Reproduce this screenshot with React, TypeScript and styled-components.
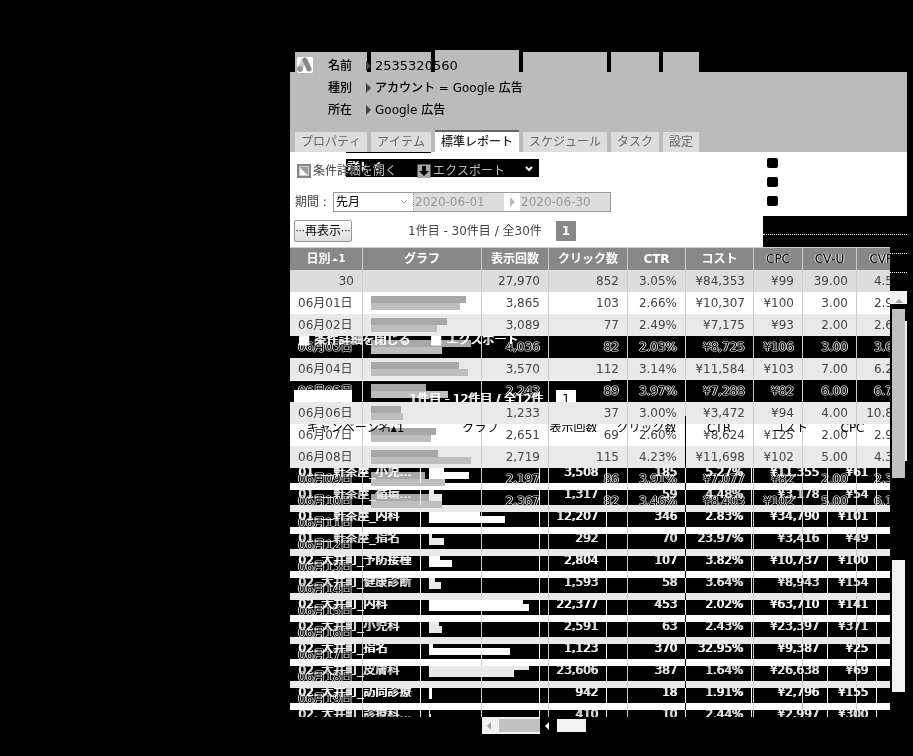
import React from "react";
import styled, { createGlobalStyle, css } from "styled-components";

const GlobalStyle = createGlobalStyle`
  * { box-sizing: border-box; }
  body {
    margin: 0;
    background: #000;
    color: #444;
    font: 12px/22px "DejaVu Sans", "Noto Sans CJK JP", sans-serif;
    font-kerning: none;
  }
  button, select, input { font: inherit; font-kerning: none; color: inherit; margin: 0; }
`;

const Page = styled.main`
  min-height: 100vh;
  padding: 50px 6px 20px 290px;
  background: #000;
  overflow: hidden;
`;

/* ---------- header ---------- */

const Header = styled.header`
  position: relative;
  padding-top: 5px;
  background: linear-gradient(#000 22px, #bbb 22px);
`;

const EchoTabs = styled.div`
  position: absolute;
  top: 0;
  left: 5px;
  height: 22px;
  display: flex;
  align-items: flex-end;
  gap: 4px;
`;

const EchoTab = styled.div<{ $w: number; $tall?: boolean }>`
  width: ${(p) => p.$w}px;
  height: ${(p) => (p.$tall ? 22 : 20)}px;
  background: #bbb;
`;

const Identity = styled.div`
  position: relative;
  display: flex;
  padding-left: 7px;
`;

const Logo = styled.svg`
  width: 16px;
  height: 16px;
  margin: 2px 15px 0 0;
`;

const Facts = styled.dl`
  margin: 0;
  color: #000;
  font-weight: 500;
`;

const Fact = styled.div`
  display: flex;
  align-items: center;
  height: 22px;
  white-space: nowrap;
  svg { margin: 0 4px 0 0; }
`;

const FactLabel = styled.dt`
  width: 38px;
`;

const FactValue = styled.dd<{ $large?: boolean }>`
  margin: 0;
  font-size: ${(p) => (p.$large ? 13 : 12)}px;
`;

const Tabs = styled.nav`
  display: flex;
  align-items: flex-end;
  gap: 4px;
  height: 31px;
  padding: 0 5px;
`;

const Tab = styled.button<{ $active?: boolean }>`
  height: ${(p) => (p.$active ? 22 : 20)}px;
  padding: 0 6px;
  border: 0;
  border-top: ${(p) => (p.$active ? "2px solid #666" : "0")};
  background: ${(p) => (p.$active ? "#fff" : "#ddd")};
  color: ${(p) => (p.$active ? "#222" : "#666")};
  font-weight: ${(p) => (p.$active ? 500 : 400)};
  line-height: 20px;
  white-space: nowrap;
`;

/* ---------- controls ---------- */

const Controls = styled.section`
  display: flex;
  height: 95px;
`;

const Filters = styled.div`
  flex: 1;
  position: relative;
  background: #fff;
`;

const Shade = styled.div`
  position: absolute;
  top: 7px;
  left: 56px;
  width: 193px;
  height: 18px;
  background: #000;
  svg { position: absolute; right: 6px; top: 7px; }
`;

const ShadeLine = styled.div`
  position: absolute;
  top: 0;
  left: 56px;
  width: 85px;
  height: 1px;
  background: #000;
`;

const ShadeText = styled.span`
  position: absolute;
  top: 0;
  left: 1px;
  height: 12px;
  line-height: 18px;
  overflow: hidden;
  color: #fff;
  text-shadow: 1px 0 #fff;
`;

const Actions = styled.div`
  display: flex;
  align-items: center;
  height: 38px;
  padding-left: 7px;
  mix-blend-mode: difference;
`;

const Action = styled.button<{ $wide?: boolean }>`
  display: flex;
  align-items: center;
  gap: 2px;
  width: ${(p) => (p.$wide ? 120 : 100)}px;
  padding: 0;
  border: 0;
  background: none;
  color: #bbb;
  white-space: nowrap;
`;

const Period = styled.div`
  display: flex;
  align-items: center;
  height: 24px;
  padding-left: 5px;
  > label { width: 38px; white-space: nowrap; }
`;

const PeriodBox = styled.div`
  display: flex;
  height: 20px;
  border: 1px solid #999;
  background: #fff;
`;

const SelectWrap = styled.div`
  display: flex;
  align-items: center;
  width: 80px;
  border-right: 1px dotted #999;
  svg { flex: none; margin-left: -14px; pointer-events: none; }
`;

const PeriodSelect = styled.select`
  appearance: none;
  flex: none;
  width: 80px;
  height: 18px;
  padding: 0 2px;
  border: 0;
  background: transparent;
  color: #000;
  line-height: 18px;
`;

const DateInput = styled.input`
  width: 90px;
  height: 18px;
  padding: 0 1px;
  border: 0;
  background: #ddd;
  color: #999;
`;

const DateArrow = styled.span`
  display: flex;
  align-items: center;
  justify-content: center;
  width: 16px;
`;

const Paging = styled.div`
  display: flex;
  align-items: center;
  height: 34px;
  padding-left: 4px;
`;

const Reload = styled.button`
  display: flex;
  align-items: center;
  justify-content: center;
  width: 58px;
  height: 22px;
  padding: 0;
  border: 1px solid #999;
  border-radius: 2px;
  background: linear-gradient(#fff, #ddd);
  color: #000;
  line-height: 20px;
  white-space: nowrap;
`;

const Leader = styled.span`
  font-size: 10px;
`;

const Count = styled.span`
  margin-left: 56px;
  width: 148px;
  white-space: nowrap;
`;

const PageNumber = styled.button`
  width: 20px;
  height: 20px;
  padding: 0;
  border: 0;
  background: #888;
  color: #fff;
  font-weight: 700;
  line-height: 20px;
`;

const Side = styled.div`
  width: 144px;
`;

const SideTop = styled.div`
  display: flex;
  flex-direction: column;
  gap: 9px;
  height: 64px;
  padding: 6px 4px;
  background: #fff;
`;

const Dot = styled.i`
  width: 11px;
  height: 10px;
  border-radius: 2px;
  background: #000;
`;

const DottedRule = styled.div<{ $short?: boolean }>`
  height: ${(p) => (p.$short ? 7 : 19)}px;
  border-bottom: 1px dotted #fff;
`;

/* ---------- report table ---------- */

const Report = styled.section`
  display: flex;
`;

const TableArea = styled.div`
  position: relative;
  flex: 1;
  min-width: 0;
  overflow: hidden;
`;

const Table = styled.table`
  width: 631px;
  table-layout: fixed;
  border-collapse: separate;
  border-spacing: 0;
  border-top: 1px solid #ccc;
  th, td {
    padding: 0;
    border-right: 1px solid #ccc;
    white-space: nowrap;
    overflow: hidden;
    vertical-align: top;
  }
`;

const outlined = css`
  color: #000;
  text-shadow: 1px 0 #ddd, -1px 0 #ddd, 0 1px #888, 0 -1px #888;
`;

const Head = styled.th<{ $outlined?: boolean }>`
  height: 22px;
  background: #888;
  color: #fff;
  font-weight: 700;
  ${(p) => p.$outlined && css`${outlined} font-weight: 400;`}
`;

const SortLabel = styled.div`
  display: flex;
  align-items: center;
  justify-content: center;
  gap: 1px;
  height: 22px;
`;

const SortOrder = styled.span`
  font-size: 10px;
`;

type Tone = "total" | "plain" | "even" | "dark" | "bandPlain" | "bandEven" | "cut";

const toneBackground: Record<Tone, string> = {
  total: "#ddd",
  plain: "#fff",
  even: "#e9e9e9",
  dark: "#000",
  bandPlain: "linear-gradient(#000 15px, #fff 15px)",
  bandEven: "linear-gradient(#000 15px, #e9e9e9 15px)",
  cut: "#000",
};

const Row = styled.tr<{ $tone: Tone }>`
  height: ${(p) => (p.$tone === "cut" ? 7 : 22)}px;
  td { background: ${(p) => toneBackground[p.$tone]}; }
  ${(p) => (p.$tone === "dark" || p.$tone.startsWith("band")) && outlined}
`;

const Value = styled.div<{ $cut?: boolean; $left?: boolean }>`
  height: ${(p) => (p.$cut ? 15 : 22)}px;
  padding: 0 8px;
  overflow: hidden;
  text-align: ${(p) => (p.$left ? "left" : "right")};
`;

const Bars = styled.div`
  height: 22px;
  padding: 4px 8px;
`;

const Bar = styled.div<{ $second?: boolean }>`
  height: 7px;
  background: ${(p) => (p.$second ? "#bebebe" : "#a8a8a8")};
`;

/* ---------- second report, showing through the first ---------- */

const Layer = styled.div<{ $top: number; $height: number; $dark?: boolean }>`
  position: absolute;
  top: ${(p) => p.$top}px;
  left: 0;
  right: 0;
  height: ${(p) => p.$height}px;
  display: flex;
  overflow: hidden;
  pointer-events: none;
  white-space: nowrap;
  line-height: 8px;
  color: ${(p) => (p.$dark ? "#000" : "#fff")};
  text-shadow: ${(p) => (p.$dark ? "none" : "1px 0 #fff")};
`;

const LayerItem = styled.span<{ $w: number; $center?: boolean }>`
  flex: none;
  width: ${(p) => p.$w}px;
  text-align: ${(p) => (p.$center ? "center" : "left")};
`;

const WhiteBox = styled.span<{ $w: number }>`
  flex: none;
  width: ${(p) => p.$w}px;
  height: 12px;
  background: #fff;
  color: #000;
  line-height: 18px;
  text-align: center;
  text-shadow: none;
`;

const ActionsEcho = styled(Layer)`
  padding-left: 8px;
`;

const PagingEcho = styled(Layer)`
  padding-left: 4px;
  line-height: 18px;
  ${LayerItem} { padding-left: 57px; }
`;

const ThinRule = styled.div`
  position: absolute;
  top: 133px;
  left: 0;
  width: 321px;
  height: 1px;
  background: #fff;
`;

const DarkRule = styled.div`
  position: absolute;
  top: 169px;
  bottom: 0;
  left: 395px;
  width: 1px;
  background: #000;
`;

const EchoTable = styled.table`
  position: absolute;
  top: 221px;
  left: 0;
  width: 642px;
  table-layout: fixed;
  border-collapse: separate;
  border-spacing: 0;
  pointer-events: none;
  td { padding: 0; vertical-align: top; overflow: hidden; }
`;

const EchoRow = styled.tr<{ $soft: boolean; $last: boolean }>`
  height: ${(p) => (p.$last ? 7 : 22)}px;
  color: ${(p) => (p.$soft ? "#e9e9e9" : "#fff")};
  text-shadow: 1px 0 currentColor;
`;

const EchoCell = styled.div<{ $left?: boolean; $last: boolean }>`
  height: ${(p) => (p.$last ? 7 : 15)}px;
  padding: 0 8px;
  overflow: hidden;
  border-right: 1px solid currentColor;
  line-height: 8px;
  text-align: ${(p) => (p.$left ? "left" : "right")};
  white-space: nowrap;
`;

const EchoBar = styled.div<{ $second?: boolean }>`
  height: ${(p) => (p.$second ? 7 : 4)}px;
  background: currentColor;
`;

/* ---------- scroll bars ---------- */

const VScroll = styled.div`
  width: 17px;
  display: flex;
  flex-direction: column;
`;

const ScrollButton = styled.div`
  display: flex;
  align-items: center;
  justify-content: center;
  height: 13px;
  margin: 18px 0 5px;
  padding-top: 6px;
  background: #f1f1f1;
`;

const Thumb = styled.div`
  position: relative;
  height: 169px;
  margin: 0 2px;
  background: #c1c1c1;
  &::after {
    content: "";
    position: absolute;
    top: 12px;
    right: -2px;
    width: 2px;
    height: 140px;
    background: #f1f1f1;
  }
`;

const Trough = styled.div`
  height: 132px;
  margin: 82px 2px 0;
  background: #f1f1f1;
`;

const HScroll = styled.div`
  display: flex;
  align-items: center;
  height: 17px;
  padding-left: 192px;
`;

const HTrack = styled.div`
  display: flex;
  align-items: center;
  justify-content: space-between;
  width: 58px;
  height: 17px;
  padding-left: 5px;
  background: #f1f1f1;
`;

const HBlock = styled.div<{ $w: number; $light?: boolean }>`
  width: ${(p) => p.$w}px;
  height: 13px;
  background: ${(p) => (p.$light ? "#f1f1f1" : "#c1c1c1")};
`;

const HArrow = styled.div`
  display: flex;
  width: 17px;
  padding-left: 5px;
`;

/* ---------- drawings ---------- */

const triangles = {
  right: { d: "M0 0 5 5 0 10Z", w: 5, h: 10 },
  left: { d: "M4 0v8L0 4Z", w: 4, h: 8 },
  up: { d: "M0 4 4 0 8 4Z", w: 8, h: 4 },
  sort: { d: "M0 3 3 0 6 3Z", w: 6, h: 3 },
};

const Triangle = ({ color, dir = "right" }: { color: string; dir?: keyof typeof triangles }) => {
  const t = triangles[dir];
  return (
    <svg width={t.w} height={t.h} aria-hidden="true">
      <path d={t.d} fill={color} />
    </svg>
  );
};

const Chevron = ({ color, weight = 1 }: { color: string; weight?: number }) => (
  <svg width="8" height="6" aria-hidden="true">
    <path d="M1 1l3 3 3-3" fill="none" stroke={color} strokeWidth={weight} />
  </svg>
);

const AdsLogo = () => (
  <Logo viewBox="0 0 16 16" role="img" aria-label="Google 広告">
    <rect width="16" height="16" rx="2" fill="#fff" />
    <path d="M7 3 3 12" stroke="#ccc" strokeWidth="5" strokeLinecap="round" />
    <path d="M8 3l4 9" stroke="#888" strokeWidth="5" strokeLinecap="round" />
    <circle cx="3" cy="12" r="3" fill="#999" />
  </Logo>
);

/* ---------- data ---------- */

type Day = { tone: Tone; date: string; bars?: [number, number]; values?: string[] };

const days: Day[] = [
  { tone: "plain", date: "06月01日", bars: [95, 89], values: ["3,865", "103", "2.66%", "¥10,307", "¥100", "3.00", "2.91%"] },
  { tone: "even", date: "06月02日", bars: [76, 66], values: ["3,089", "77", "2.49%", "¥7,175", "¥93", "2.00", "2.60%"] },
  { tone: "dark", date: "06月03日", bars: [100, 71], values: ["4,036", "82", "2.03%", "¥8,725", "¥106", "3.00", "3.66%"] },
  { tone: "even", date: "06月04日", bars: [88, 97], values: ["3,570", "112", "3.14%", "¥11,584", "¥103", "7.00", "6.25%"] },
  { tone: "dark", date: "06月05日", bars: [55, 77], values: ["2,243", "89", "3.97%", "¥7,288", "¥82", "6.00", "6.74%"] },
  { tone: "even", date: "06月06日", bars: [30, 32], values: ["1,233", "37", "3.00%", "¥3,472", "¥94", "4.00", "10.81%"] },
  { tone: "plain", date: "06月07日", bars: [65, 60], values: ["2,651", "69", "2.60%", "¥8,624", "¥125", "2.00", "2.90%"] },
  { tone: "even", date: "06月08日", bars: [67, 100], values: ["2,719", "115", "4.23%", "¥11,698", "¥102", "5.00", "4.35%"] },
  { tone: "bandPlain", date: "06月09日", bars: [54, 74], values: ["2,197", "86", "3.91%", "¥7,077", "¥82", "2.00", "2.33%"] },
  { tone: "bandEven", date: "06月10日", bars: [58, 71], values: ["2,367", "82", "3.46%", "¥8,403", "¥102", "5.00", "6.10%"] },
  { tone: "bandPlain", date: "06月11日" },
  { tone: "bandEven", date: "06月12日" },
  { tone: "bandPlain", date: "06月13日" },
  { tone: "bandEven", date: "06月14日" },
  { tone: "bandPlain", date: "06月15日" },
  { tone: "bandEven", date: "06月16日" },
  { tone: "bandPlain", date: "06月17日" },
  { tone: "bandEven", date: "06月18日" },
  { tone: "bandPlain", date: "06月19日" },
];

const campaigns: { name: string; bars: [number, number]; values: string[] }[] = [
  { name: "01. 二軒茶屋_小児…", bars: [15, 40], values: ["3,508", "185", "5.27%", "¥11,355", "¥61"] },
  { name: "01. 二軒茶屋_循環…", bars: [5, 13], values: ["1,317", "59", "4.48%", "¥3,178", "¥54"] },
  { name: "01. 二軒茶屋_内科", bars: [51, 76], values: ["12,207", "346", "2.83%", "¥34,790", "¥101"] },
  { name: "01. 二軒茶屋_指名", bars: [3, 15], values: ["292", "70", "23.97%", "¥3,416", "¥49"] },
  { name: "02. 大井町_予防接種", bars: [11, 23], values: ["2,804", "107", "3.82%", "¥10,737", "¥100"] },
  { name: "02. 大井町_健康診断", bars: [6, 12], values: ["1,593", "58", "3.64%", "¥8,943", "¥154"] },
  { name: "02. 大井町_内科", bars: [94, 100], values: ["22,377", "453", "2.02%", "¥63,710", "¥141"] },
  { name: "02. 大井町_小児科", bars: [10, 13], values: ["2,591", "63", "2.43%", "¥23,397", "¥371"] },
  { name: "02. 大井町_指名", bars: [4, 81], values: ["1,123", "370", "32.95%", "¥9,387", "¥25"] },
  { name: "02. 大井町_皮膚科", bars: [100, 85], values: ["23,606", "387", "1.64%", "¥26,638", "¥69"] },
  { name: "02. 大井町_訪問診療", bars: [3, 3], values: ["942", "18", "1.91%", "¥2,796", "¥155"] },
  { name: "02. 大井町_診療科…", bars: [1, 2], values: ["410", "10", "2.44%", "¥2,997", "¥300"] },
];

const tabs = ["プロパティ", "アイテム", "標準レポート", "スケジュール", "タスク", "設定"];
const echoWidths = [72, 60, 84, 84, 48, 36];
const columnWidths = [73, 119, 67, 79, 58, 68, 49, 54, 64];
const echoColumns = [131, 119, 67, 79, 66, 76, 49, 55];
const heads = ["グラフ", "表示回数", "クリック数", "CTR", "コスト", "CPC", "CV-U", "CVR-U"];
const echoHeads = ["キャンペーン名▴1", "グラフ", "表示回数", "クリック数", "CTR", "コスト", "CPC"];
const facts = [
  ["名前", "2535320560"],
  ["種別", "アカウント = Google 広告"],
  ["所在", "Google 広告"],
];

export default function App() {
  return (
    <>
      <GlobalStyle />
      <Page>
        <Header>
          <EchoTabs>
            {echoWidths.map((w, i) => (
              <EchoTab key={i} $w={w} $tall={i === 2} />
            ))}
          </EchoTabs>
          <Identity>
            <AdsLogo />
            <Facts>
              {facts.map(([label, value], i) => (
                <Fact key={label}>
                  <FactLabel>{label}</FactLabel>
                  <Triangle color="#444" />
                  <FactValue $large={i === 0}>{value}</FactValue>
                </Fact>
              ))}
            </Facts>
          </Identity>
          <Tabs>
            {tabs.map((t, i) => (
              <Tab key={t} $active={i === 2}>{t}</Tab>
            ))}
          </Tabs>
        </Header>

        <Controls>
          <Filters>
            <ShadeLine />
            <Shade>
              <ShadeText>詳しく</ShadeText>
              <Chevron color="#fff" weight={2} />
            </Shade>
            <Actions>
              <Action $wide>
                <svg width="14" height="14" aria-hidden="true">
                  <path d="M1 1h12v12H1z" fill="#333" stroke="#777" strokeWidth="2" />
                  <path d="M3 3h8v8z" fill="#666" />
                  <path d="M3 4v7h7z" fill="#000" />
                </svg>
                条件詳細を開く
              </Action>
              <Action>
                <svg width="14" height="14" aria-hidden="true">
                  <path d="M0 0h14v14H0z" fill="#555" />
                  <path d="M1 1h12v12H1z" fill="#aaa" />
                  <path d="M5 2h4v5h3l-5 5-5-5h3z" fill="#000" />
                </svg>
                エクスポート
              </Action>
            </Actions>
            <Period>
              <label htmlFor="period">期間 :</label>
              <PeriodBox>
                <SelectWrap>
                  <PeriodSelect id="period" defaultValue="先月">
                    <option>先月</option>
                  </PeriodSelect>
                  <Chevron color="#aaa" />
                </SelectWrap>
                <DateInput aria-label="開始日" defaultValue="2020-06-01" />
                <DateArrow><Triangle color="#bbb" /></DateArrow>
                <DateInput aria-label="終了日" defaultValue="2020-06-30" />
              </PeriodBox>
            </Period>
            <Paging>
              <Reload><Leader>···</Leader>再表示<Leader>···</Leader></Reload>
              <Count>1件目 - 30件目 / 全30件</Count>
              <PageNumber>1</PageNumber>
            </Paging>
          </Filters>
          <Side>
            <SideTop>
              <Dot />
              <Dot />
              <Dot />
            </SideTop>
            <DottedRule />
          </Side>
        </Controls>

        <Report>
          <TableArea>
            <Table>
              <colgroup>
                {columnWidths.map((w, i) => <col key={i} width={w} />)}
              </colgroup>
              <thead>
                <tr>
                  <Head>
                    <SortLabel>日別<Triangle color="#fff" dir="sort" /><SortOrder>1</SortOrder></SortLabel>
                  </Head>
                  {heads.map((h, i) => <Head key={h} $outlined={i > 4}>{h}</Head>)}
                </tr>
              </thead>
              <tbody>
                <Row $tone="total">
                  {["30", "", "27,970", "852", "3.05%", "¥84,353", "¥99", "39.00", "4.58%"].map((v, i) => (
                    <td key={i}><Value>{v}</Value></td>
                  ))}
                </Row>
                {days.map((d) => {
                  const cut = d.tone.startsWith("band");
                  return (
                    <Row key={d.date} $tone={d.tone}>
                      <td><Value $left $cut={cut}>{d.date}</Value></td>
                      <td>
                        {d.bars && (
                          <Bars>
                            <Bar style={{ width: d.bars[0] }} />
                            <Bar $second style={{ width: d.bars[1] }} />
                          </Bars>
                        )}
                      </td>
                      {heads.slice(1).map((h, i) => (
                        <td key={h}><Value $cut={cut}>{d.values?.[i]}</Value></td>
                      ))}
                    </Row>
                  );
                })}
                <Row $tone="cut">
                  {columnWidths.map((_, i) => <td key={i} />)}
                </Row>
              </tbody>
            </Table>

            <ActionsEcho $top={89} $height={12}>
              <LayerItem $w={16}>■</LayerItem>
              <LayerItem $w={116}>条件詳細を閉じる</LayerItem>
              <LayerItem $w={16}>■</LayerItem>
              <LayerItem $w={90}>エクスポート</LayerItem>
            </ActionsEcho>
            <ThinRule />
            <PagingEcho $top={143} $height={12}>
              <WhiteBox $w={58} />
              <LayerItem $w={204}>1件目 - 12件目 / 全12件</LayerItem>
              <WhiteBox $w={20}>1</WhiteBox>
            </PagingEcho>
            <Layer $top={177} $height={8} $dark>
              {echoHeads.map((t, i) => (
                <LayerItem key={t} $w={echoColumns[i]} $center>{t}</LayerItem>
              ))}
            </Layer>
            <DarkRule />
            <EchoTable>
              <colgroup>
                {echoColumns.map((w, i) => <col key={i} width={w} />)}
              </colgroup>
              <tbody>
                {campaigns.map((c, r) => {
                  const last = r === campaigns.length - 1;
                  return (
                    <EchoRow key={c.name} $soft={r % 2 === 1} $last={last}>
                      <td><EchoCell $left $last={last}>{c.name}</EchoCell></td>
                      <td>
                        <EchoCell $left $last={last}>
                          <EchoBar style={{ width: c.bars[0] }} />
                          <EchoBar $second style={{ width: c.bars[1] }} />
                        </EchoCell>
                      </td>
                      {c.values.map((v, i) => (
                        <td key={i}><EchoCell $last={last}>{v}</EchoCell></td>
                      ))}
                      <td />
                    </EchoRow>
                  );
                })}
              </tbody>
            </EchoTable>
          </TableArea>
          <VScroll>
            <DottedRule $short />
            <DottedRule />
            <ScrollButton><Triangle color="#a3a3a3" dir="up" /></ScrollButton>
            <Thumb />
            <Trough />
          </VScroll>
        </Report>
        <HScroll>
          <HTrack>
            <Triangle color="#a3a3a3" dir="left" />
            <HBlock $w={41} />
          </HTrack>
          <HArrow><Triangle color="#fff" dir="left" /></HArrow>
          <HBlock $w={29} $light />
        </HScroll>
      </Page>
    </>
  );
}
